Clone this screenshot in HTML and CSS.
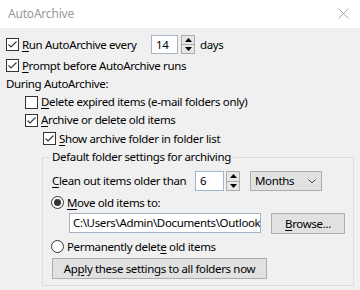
FILE: index.html
```html
<!DOCTYPE html>
<html>
<head>
<meta charset="utf-8">
<title>AutoArchive</title>
<link rel="stylesheet" href="styles.css">
</head>
<body>
<div class="dialog">
  <div class="titlebar">
    <span class="title">AutoArchive</span>
    <svg class="close" width="11" height="11" viewBox="0 0 11 11"><path d="M0.5 0.5 L10.5 10.5 M10.5 0.5 L0.5 10.5"/></svg>
  </div>
  <div class="content">
    <div class="row r1 ind0">
      <span class="cb"><svg width="11" height="11" viewBox="0 0 11 11"><polyline points="1.5,5.5 4,8 9.5,2.5"/></svg></span>
      <span class="lbl w-run"><u>R</u>un AutoArchive every</span>
      <span class="field num-days">14</span>
      <span class="spin gap3"><span class="up"><svg width="7" height="4" viewBox="0 0 7 4"><path d="M0 4 L3.5 0 L7 4 Z"/></svg></span><span class="dn"><svg width="7" height="4" viewBox="0 0 7 4"><path d="M0 0 L7 0 L3.5 4 Z"/></svg></span></span>
      <span class="lbl unit">days</span>
    </div>
    <div class="row r2 ind0">
      <span class="cb"><svg width="11" height="11" viewBox="0 0 11 11"><polyline points="1.5,5.5 4,8 9.5,2.5"/></svg></span>
      <span class="lbl"><u>P</u>rompt before AutoArchive runs</span>
    </div>
    <div class="row r-during">
      <span class="lbl">During AutoArchive:</span>
    </div>
    <div class="row r-delete ind1">
      <span class="cb"></span>
      <span class="lbl"><u>D</u>elete expired items (e-mail folders only)</span>
    </div>
    <div class="row r-archive ind1">
      <span class="cb"><svg width="11" height="11" viewBox="0 0 11 11"><polyline points="1.5,5.5 4,8 9.5,2.5"/></svg></span>
      <span class="lbl"><u>A</u>rchive or delete old items</span>
    </div>
    <div class="row r-show ind2">
      <span class="cb"><svg width="11" height="11" viewBox="0 0 11 11"><polyline points="1.5,5.5 4,8 9.5,2.5"/></svg></span>
      <span class="lbl"><u>S</u>how archive folder in folder list</span>
    </div>
    <fieldset class="group">
      <legend class="legend">Default folder settings for archiving</legend>
      <div class="row r-clean">
        <span class="lbl w-clean"><u>C</u>lean out items older than</span>
        <span class="field num-age">6</span>
        <span class="spin gap2"><span class="up"><svg width="7" height="4" viewBox="0 0 7 4"><path d="M0 4 L3.5 0 L7 4 Z"/></svg></span><span class="dn"><svg width="7" height="4" viewBox="0 0 7 4"><path d="M0 0 L7 0 L3.5 4 Z"/></svg></span></span>
        <span class="combo"><span>Months</span><svg width="8" height="5" viewBox="0 0 8 5"><polyline points="0.5,0.5 4,4 7.5,0.5"/></svg></span>
      </div>
      <div class="row r-move radio-row">
        <span class="radio"><svg width="13" height="13" viewBox="0 0 13 13"><circle class="ring" cx="6.5" cy="6.5" r="6"/><circle class="dot" cx="6.5" cy="6.5" r="3.5"/></svg></span>
        <span class="lbl"><u>M</u>ove old items to:</span>
      </div>
      <div class="row r-path">
        <span class="field path">C:\Users\Admin\Documents\Outlook</span>
        <span class="btn browse"><span><u>B</u>rowse...</span></span>
      </div>
      <div class="row r-perm radio-row">
        <span class="radio"><svg width="13" height="13" viewBox="0 0 13 13"><circle class="ring" cx="6.5" cy="6.5" r="6"/></svg></span>
        <span class="lbl">Permanently delet<u>e</u> old items</span>
      </div>
      <div class="row r-apply">
        <span class="btn apply"><span>Ap<u>p</u>ly these settings to all folders now</span></span>
      </div>
    </fieldset>
  </div>
</div>
</body>
</html>
```

FILE: styles.css
```css
html, body {
  margin: 0;
  padding: 0;
  width: 360px;
  height: 290px;
  overflow: hidden;
  background: #f0f0f0;
}

.dialog {
  width: 360px;
  height: 290px;
  font-family: "Noto Sans", "Open Sans", sans-serif;
  font-size: 11.5px;
  letter-spacing: -0.35px;
  color: #000;
  background: #f0f0f0;
}

.titlebar {
  height: 28px;
  background: #fff;
  display: flex;
  align-items: center;
  justify-content: space-between;
  padding: 0 11px 2px 8px;
  box-sizing: border-box;
}

.title {
  color: #9a9a9a;
  font-size: 12px;
  letter-spacing: -0.2px;
}

.close path {
  stroke: #a8a8a8;
  stroke-width: 1;
  fill: none;
}

.content {
  padding-top: 7px;
}

.row {
  display: flex;
  align-items: center;
  height: 19px;
  line-height: 16px;
  white-space: nowrap;
}

.ind0 { padding-left: 6px; }
.ind1 { padding-left: 25px; }
.ind2 { padding-left: 43px; }

.r2 { margin-top: 2px; }
.r-during { height: 18px; padding-left: 6px; }
.r-delete { height: 18px; }
.r-archive { height: 18px; }

.cb {
  flex: none;
  width: 13px;
  height: 13px;
  box-sizing: border-box;
  border: 1px solid #333;
  background: #fff;
  margin-right: 3px;
  display: flex;
  align-items: center;
  justify-content: center;
}

.cb polyline {
  fill: none;
  stroke: #333;
  stroke-width: 1.1;
}

.lbl u, .btn u {
  text-decoration-thickness: 1px;
  text-underline-offset: 2px;
}

.w-run { width: 129px; flex: none; }
.unit { margin-left: 5px; }

.field {
  flex: none;
  box-sizing: border-box;
  background: #fff;
  border: 1px solid #a6b5c6;
  padding-left: 4px;
  display: flex;
  align-items: center;
  overflow: hidden;
}

.num-days { width: 27px; height: 19px; }
.num-age { width: 29px; height: 20px; border-color: #9db6d3; }

.spin {
  flex: none;
  width: 14px;
  display: flex;
  flex-direction: column;
  box-sizing: border-box;
}
.r1 .spin { height: 19px; }
.r-clean .spin { height: 20px; }
.gap3 { margin-left: 3px; }
.gap2 { margin-left: 2px; }

.spin .up, .spin .dn {
  flex: 1;
  background: #e6e6e6;
  border: 1px solid #acacac;
  display: flex;
  align-items: center;
  justify-content: center;
}
.spin .dn { border-top: none; }
.spin path { fill: #000; }

.group {
  margin: 1px 0 0 42px;
  width: 312px;
  box-sizing: border-box;
  border: 1px solid #dcdcdc;
  padding: 6px 0 6px 9px;
  min-width: 0;
}

.legend {
  padding: 0 2px;
  margin-left: -2px;
  line-height: 16px;
}

.r-clean { height: 20px; }
.w-clean { width: 143px; flex: none; }

.combo {
  flex: none;
  margin-left: 10px;
  width: 72px;
  height: 20px;
  box-sizing: border-box;
  background: #e1e1e1;
  border: 1px solid #adadad;
  display: flex;
  align-items: center;
  justify-content: space-between;
  padding: 0 5px 0 4px;
}
.combo polyline {
  fill: none;
  stroke: #444;
  stroke-width: 1;
}

.radio-row { margin-left: -1px; }
.r-move { margin-top: 2px; }
.radio {
  flex: none;
  width: 13px;
  height: 13px;
  margin-right: 3px;
  display: flex;
}
.radio .ring { fill: #fff; stroke: #333; stroke-width: 1; }
.radio .dot { fill: #333; }

.r-path {
  margin-top: 1px;
  height: 21px;
  padding-left: 17px;
  align-items: flex-start;
}
.path {
  width: 192px;
  height: 20px;
  padding-left: 3px;
  white-space: nowrap;
  border-color: #a3b2c4;
}

.btn {
  flex: none;
  box-sizing: border-box;
  background: #e1e1e1;
  border: 1px solid #adadad;
  display: flex;
  align-items: center;
  justify-content: center;
}
.browse {
  margin-left: 10px;
  width: 74px;
  height: 21px;
}

.r-perm { margin-top: 3px; }

.r-apply {
  margin-top: 2px;
  height: 21px;
}
.apply {
  width: 215px;
  height: 21px;
}
```
